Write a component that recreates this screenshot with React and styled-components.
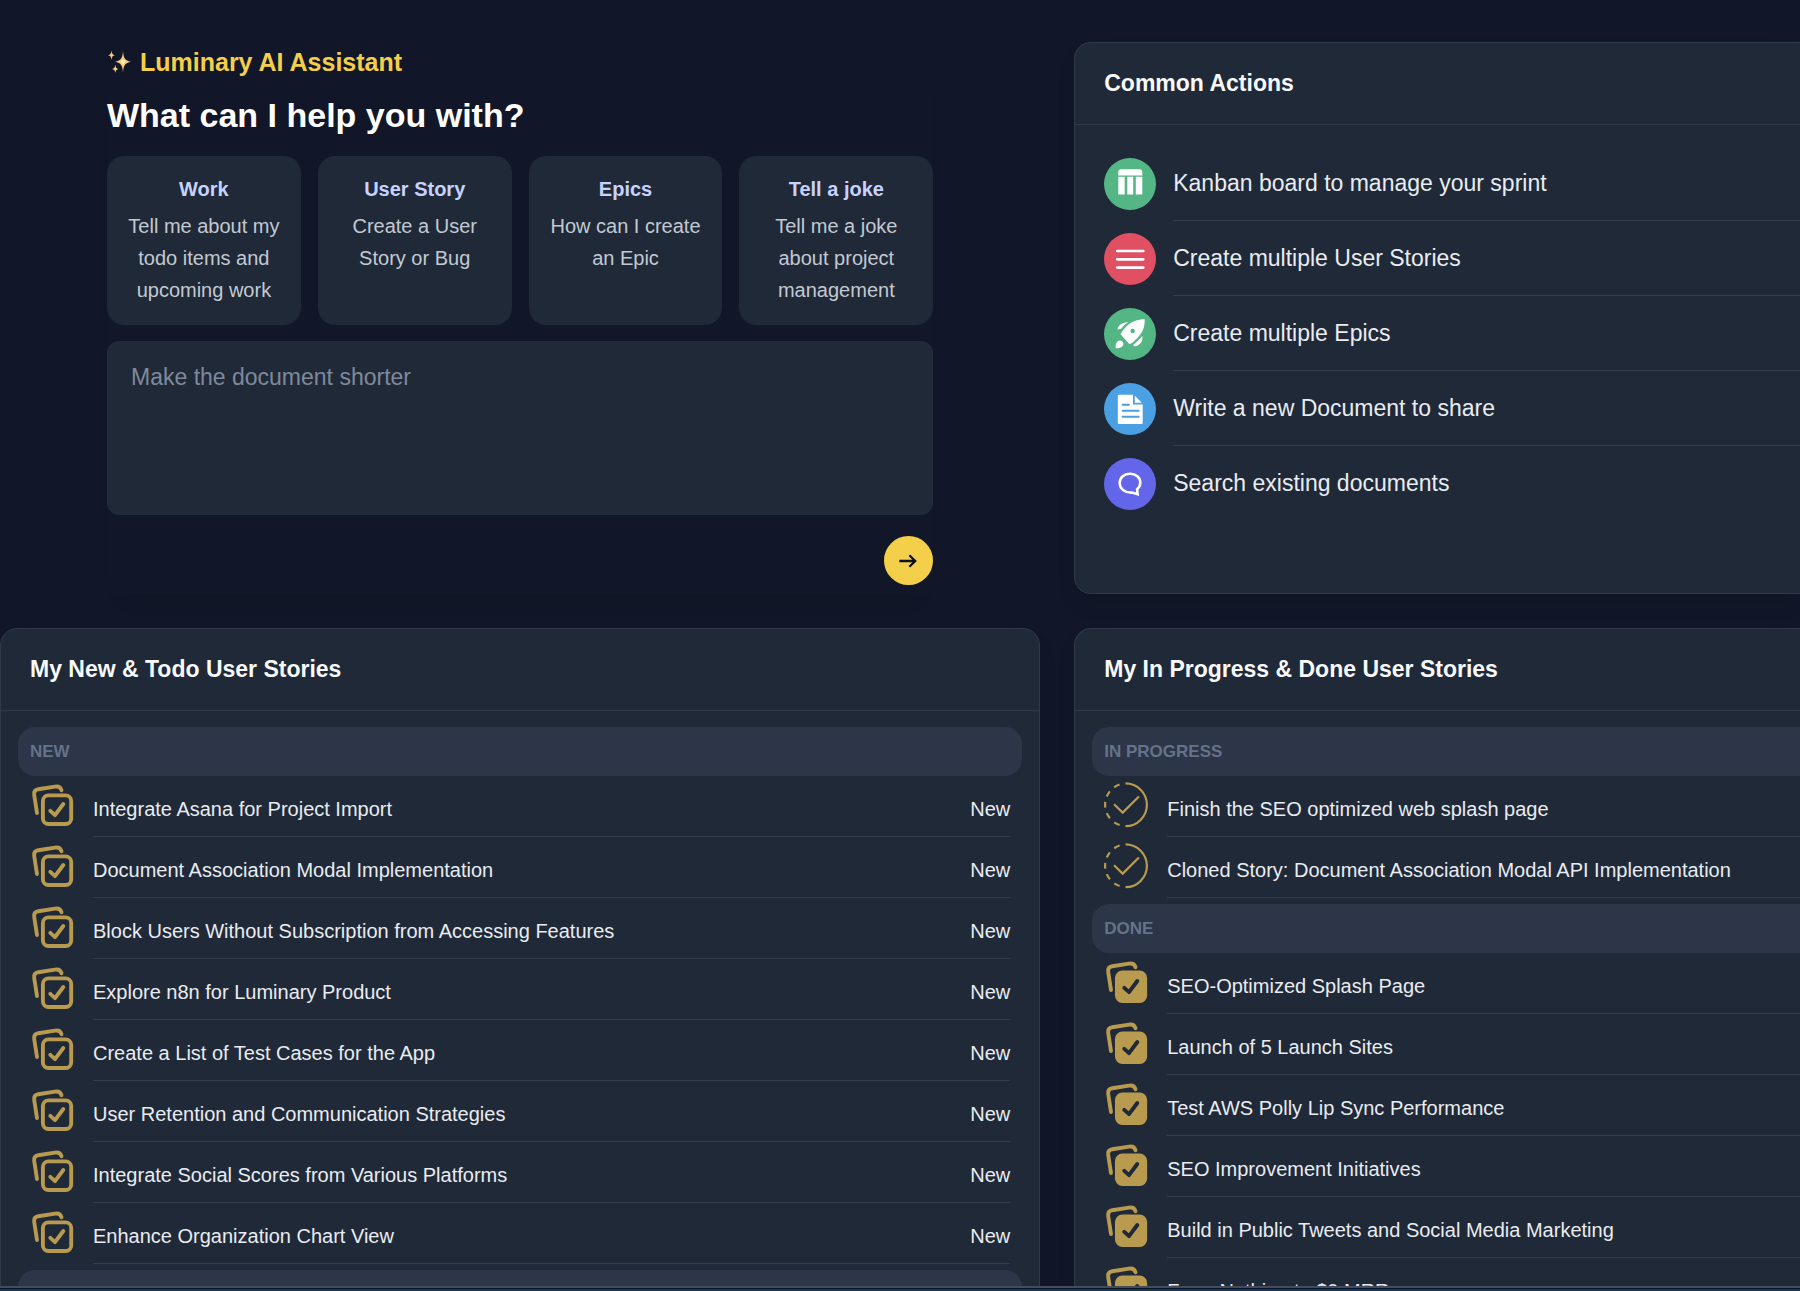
import React from "react";
import styled, { createGlobalStyle } from "styled-components";

const GlobalStyle = createGlobalStyle`
  *, *::before, *::after { box-sizing: border-box; }
  body {
    margin: 0;
    background: #111728;
    color: #e9ecf1;
    font-family: "Liberation Sans", Arial, Helvetica, sans-serif;
    font-size: 20px;
  }
  button, textarea { font: inherit; color: inherit; }
  h1, h2, h3, p, ul { margin: 0; padding: 0; }
`;

const Page = styled.div`
  height: 100vh;
  display: flex;
  flex-direction: column;
`;

const Dashboard = styled.main`
  flex: 1;
  min-height: 0;
  overflow: hidden;
  display: grid;
  grid-template-columns: minmax(0, 43fr) minmax(0, 30fr);
  grid-template-rows: max-content max-content;
  align-content: start;
  gap: 34px;
  padding-top: 42px;
`;

const Dock = styled.footer`
  flex: none;
  height: 5px;
  border-top: 2px solid #444b5b;
  background: linear-gradient(#0c1526 1px, #133557 1px);
`;

const Assistant = styled.section`
  margin: 0 107px;
  min-height: 552px;
  display: flex;
  flex-direction: column;
  box-shadow: 0 20px 20px -18px rgba(0, 0, 0, 0.14);
`;

const Brand = styled.p`
  display: flex;
  align-items: center;
  gap: 7px;
  font-size: 25px;
  font-weight: 700;
  line-height: 40px;
  color: #f4cf49;
`;

const Question = styled.h1`
  margin: 13px 0 20px;
  font-size: 34px;
  line-height: 41px;
  color: #ffffff;
`;

const Prompts = styled.div`
  display: grid;
  grid-template-columns: repeat(4, minmax(0, 1fr));
  gap: 17px;
`;

const PromptCard = styled.button`
  display: flex;
  flex-direction: column;
  align-items: center;
  justify-content: flex-start;
  gap: 5px;
  padding: 17px 17px 19px;
  border: 0;
  border-radius: 17px;
  background: #202938;
  line-height: 32px;
  text-align: center;
  color: #c3c9d2;
  cursor: pointer;
`;

const PromptTitle = styled.strong`
  color: #c7d2fe;
`;

const AskForm = styled.form`
  display: flex;
  flex-direction: column;
  align-items: flex-end;
  margin-top: 16px;
  gap: 21px;
`;

const AskBox = styled.textarea`
  display: block;
  width: 100%;
  height: 174px;
  padding: 21px 23px;
  border: 1px solid #232c3b;
  border-radius: 12px;
  background: #202938;
  font-size: 23px;
  line-height: 28px;
  resize: none;
  outline: none;
  &::placeholder { color: #7f899b; opacity: 1; }
`;

const SendButton = styled.button`
  display: grid;
  place-items: center;
  width: 49px;
  height: 49px;
  padding: 0;
  border: 0;
  border-radius: 50%;
  background: #f4cf49;
  color: #0b0f19;
  cursor: pointer;
`;

const Panel = styled.section`
  min-height: 552px;
  border: 1px solid #303949;
  border-right-width: ${(p) => (p.$bleed ? "0" : "1px")};
  border-radius: ${(p) => (p.$bleed ? "17px 0 0 17px" : "17px")};
  background: #202938;
  box-shadow: 0 12px 24px -6px rgba(0, 0, 0, 0.12);
`;

const PanelTitle = styled.h2`
  padding: 0 29px;
  border-bottom: 1px solid #303949;
  font-size: 23px;
  line-height: 81px;
  color: #f8fafc;
`;

const ActionList = styled.ul`
  list-style: none;
  padding: 21px 0 0 29px;
`;

const ActionLink = styled.a`
  display: flex;
  align-items: center;
  gap: 17px;
  color: inherit;
  text-decoration: none;
`;

const Badge = styled.span`
  flex: none;
  display: grid;
  place-items: center;
  width: 52px;
  height: 52px;
  border-radius: 50%;
  background: ${(p) => p.$color};
  color: #ffffff;
`;

const ActionText = styled.span`
  flex: 1;
  border-bottom: 1px solid ${(p) => (p.$last ? "transparent" : "#333c4c")};
  font-size: 23px;
  line-height: 74px;
`;

const PanelBody = styled.div`
  display: flex;
  flex-direction: column;
  gap: 6px;
  padding: 16px ${(p) => (p.$bleed ? "0" : "17px")} 17px 17px;
`;

const GroupTitle = styled.h3`
  padding: 0 12px;
  border-radius: ${(p) => (p.$bleed ? "17px 0 0 17px" : "17px")};
  background: #2d3548;
  font-size: 17px;
  line-height: 49px;
  text-transform: uppercase;
  color: #64728a;
`;

const StoryList = styled.ul`
  list-style: none;
`;

const Story = styled.li`
  display: flex;
  align-items: flex-start;
  gap: 17px;
  padding: 6px ${(p) => (p.$bleed ? "0" : "12px")} 0 12px;
`;

const StoryLine = styled.div`
  flex: 1;
  display: flex;
  justify-content: space-between;
  border-bottom: 1px solid #333c4c;
  line-height: 54px;
  white-space: nowrap;
`;

const Icon = styled.svg`
  flex: none;
  display: block;
`;

function Sparkles() {
  return (
    <Icon width="26" height="24" viewBox="0 0 26 24" aria-hidden="true">
      <g fill="#f6cd78">
        <path d="M16 1C16.6 8 17.8 10.600 24 11.700C17.800 12.800 16.600 15.500 16 22.500C15.400 15.500 14.200 12.800 8 11.700C14.200 10.600 15.400 8 16 1Z" />
        <path d="M4.500 0.500C4.900 3.700 5.500 4.700 8 5.200C5.500 5.700 4.900 6.700 4.500 10C4.100 6.700 3.500 5.700 1 5.200C3.500 4.700 4.100 3.700 4.500 0.500Z" />
        <path d="M8.300 14.500C8.700 17.500 9.300 18.500 11.500 19C9.300 19.500 8.700 20.400 8.300 23C7.900 20.400 7.300 19.500 5 19C7.300 18.500 7.900 17.500 8.300 14.500Z" />
      </g>
      <circle cx="16" cy="11.700" r="2.200" fill="#fdeeb0" />
    </Icon>
  );
}

function ArrowRight() {
  return (
    <Icon width="21" height="20" viewBox="0 0 21 20" fill="none" stroke="currentColor" strokeWidth="2.300" aria-hidden="true">
      <path d="M1.300 10H17.400M11.400 4.200L17.200 10L11.400 15.800" />
    </Icon>
  );
}

function KanbanIcon() {
  return (
    <Icon width="52" height="52" viewBox="0 0 52 52" fill="currentColor" aria-hidden="true">
      <path d="M14.300 17.500V14a2.700 2.700 0 0 1 2.700-2.700H35.600a2.700 2.700 0 0 1 2.700 2.700V17.500Z" />
      <path d="M14.300 18.700H20.700V36.400H14.300ZM23.300 18.700H29.200V36.400H23.300ZM31.800 18.700H38.300V36.400H31.800Z" />
    </Icon>
  );
}

function LinesIcon() {
  return (
    <Icon width="52" height="52" viewBox="0 0 52 52" stroke="currentColor" strokeWidth="2.700" strokeLinecap="round" aria-hidden="true">
      <path d="M13.200 18H39.300M13.200 26.300H39.300M13.200 34.600H39.300" />
    </Icon>
  );
}

function RocketIcon() {
  return (
    <Icon width="52" height="52" viewBox="0 0 52 52" fill="currentColor" aria-hidden="true">
      <path fillRule="evenodd" d="M40.700 11.300C35.500 11.300 29 12.700 24.500 16.600C21.200 19.400 18.500 22.800 16.500 26.200L25 35.800C26.800 36 28 35 29.300 34C32.500 31.200 35.500 28 37.700 24.500C40 20.700 40.900 16 40.700 11.300ZM28.700 20.800a2.200 2.200 0 1 1 0 4.400a2.200 2.200 0 0 1 0-4.400Z" />
      <path d="M24.400 14C20.500 14.600 17.400 15.200 15.600 17.200C14.200 18.700 13.500 20.300 13.600 21.500L17.200 20.800C19.200 18 21.500 15.800 24.400 14Z" />
      <path d="M38.300 27.800C38.700 31.200 38.200 33.700 36.300 35.600C34.700 37.200 32.800 38.300 31.200 38.300C30 38.300 29.300 37.700 29.300 36.700C32.800 34.200 35.700 31.200 38.300 27.800Z" />
      <path d="M11.600 40.300C11.400 37.200 12 34.800 13.500 33.400C15 32 17.300 32.200 18.500 33.500C19.700 34.800 19.700 36.900 18.400 38.300C16.900 39.800 14.500 40.400 11.600 40.300Z" />
    </Icon>
  );
}

function DocumentIcon() {
  return (
    <Icon width="52" height="52" viewBox="0 0 52 52" aria-hidden="true">
      <path fill="currentColor" d="M15 11.800H29V21.600H38.700V39.800a1.200 1.200 0 0 1-1.200 1.200H15a1.200 1.200 0 0 1-1.200-1.200V13a1.200 1.200 0 0 1 1.200-1.200ZM30.800 12.700L37.800 19.700H30.800Z" />
      <path stroke="#4aa0e2" strokeWidth="1.900" strokeLinecap="round" d="M18.600 21.700H25M18.600 27.800H34.700M18.600 33.800H34.700" />
    </Icon>
  );
}

function ChatIcon() {
  return (
    <Icon width="52" height="52" viewBox="0 0 52 52" fill="none" stroke="currentColor" strokeWidth="2.600" aria-hidden="true">
      <path d="M26 15.700C31.800 15.700 36.300 19.400 36.300 24.600C36.300 27.400 35.200 29.600 33.100 31.200L33.600 36.200L28.200 34.600C21.500 35 15.700 31 15.700 25C15.700 19.400 20.200 15.700 26 15.700Z" />
    </Icon>
  );
}

function StackCheckIcon({ filled }) {
  return (
    <Icon width="46" height="46" viewBox="0 0 46 46" fill="none" stroke="#b89b4f" strokeWidth="3.900" strokeLinecap="round" strokeLinejoin="round" aria-hidden="true">
      <path d="M7 31L4.200 13C3.700 9.500 5 7.800 8.300 7.200L25 4.600C28.700 4 30.600 5.100 31.500 8.300" />
      <rect x="12.900" y="13.400" width="28.300" height="28.600" rx="5.500" fill={filled ? "#b89b4f" : "none"} />
      <path d="M20.300 28.900L25 33.100L33.300 22" stroke={filled ? "#202938" : "#b89b4f"} />
    </Icon>
  );
}

function ProgressIcon() {
  return (
    <Icon width="46" height="46" viewBox="0 0 46 46" fill="none" stroke="#b89b4f" strokeWidth="2.200" aria-hidden="true">
      <path d="M21.500 1.400A21.400 21.400 0 0 1 21.500 44.200" />
      <path pathLength="180" strokeDasharray="0 19 16 16 16 15 16 15 16 16 16 30" d="M22.500 44.200A21.400 21.400 0 0 1 22.500 1.400" />
      <path d="M10 22.300L18.700 30.600L34.900 14.500" />
    </Icon>
  );
}

const prompts = [
  { title: "Work", text: "Tell me about my todo items and upcoming work" },
  { title: "User Story", text: "Create a User Story or Bug" },
  { title: "Epics", text: "How can I create an Epic" },
  { title: "Tell a joke", text: "Tell me a joke about project management" },
];

const actions = [
  { text: "Kanban board to manage your sprint", color: "#55b685", icon: <KanbanIcon /> },
  { text: "Create multiple User Stories", color: "#e04f62", icon: <LinesIcon /> },
  { text: "Create multiple Epics", color: "#55b685", icon: <RocketIcon /> },
  { text: "Write a new Document to share", color: "#4aa0e2", icon: <DocumentIcon /> },
  { text: "Search existing documents", color: "#6366e8", icon: <ChatIcon /> },
];

const newStories = [
  "Integrate Asana for Project Import",
  "Document Association Modal Implementation",
  "Block Users Without Subscription from Accessing Features",
  "Explore n8n for Luminary Product",
  "Create a List of Test Cases for the App",
  "User Retention and Communication Strategies",
  "Integrate Social Scores from Various Platforms",
  "Enhance Organization Chart View",
];

const inProgressStories = [
  "Finish the SEO optimized web splash page",
  "Cloned Story: Document Association Modal API Implementation",
];

const doneStories = [
  "SEO-Optimized Splash Page",
  "Launch of 5 Launch Sites",
  "Test AWS Polly Lip Sync Performance",
  "SEO Improvement Initiatives",
  "Build in Public Tweets and Social Media Marketing",
  "From Nothing to $0 MRR",
];

function Stories({ items, icon, status, bleed }) {
  return (
    <StoryList>
      {items.map((title) => (
        <Story key={title} $bleed={bleed}>
          {icon}
          <StoryLine>
            <span>{title}</span>
            {status && <span>{status}</span>}
          </StoryLine>
        </Story>
      ))}
    </StoryList>
  );
}

export default function App() {
  return (
    <Page>
      <GlobalStyle />
      <Dashboard>
        <Assistant>
          <Brand>
            <Sparkles />
            Luminary AI Assistant
          </Brand>
          <Question>What can I help you with?</Question>
          <Prompts>
            {prompts.map((p) => (
              <PromptCard key={p.title} type="button">
                <PromptTitle>{p.title}</PromptTitle>
                <span>{p.text}</span>
              </PromptCard>
            ))}
          </Prompts>
          <AskForm onSubmit={(e) => e.preventDefault()}>
            <AskBox aria-label="Message" placeholder="Make the document shorter" />
            <SendButton type="submit" aria-label="Send">
              <ArrowRight />
            </SendButton>
          </AskForm>
        </Assistant>

        <Panel $bleed>
          <PanelTitle>Common Actions</PanelTitle>
          <ActionList>
            {actions.map((a, i) => (
              <li key={a.text}>
                <ActionLink href="#">
                  <Badge $color={a.color}>{a.icon}</Badge>
                  <ActionText $last={i === actions.length - 1}>{a.text}</ActionText>
                </ActionLink>
              </li>
            ))}
          </ActionList>
        </Panel>

        <Panel>
          <PanelTitle>My New &amp; Todo User Stories</PanelTitle>
          <PanelBody>
            <div>
              <GroupTitle>New</GroupTitle>
              <Stories items={newStories} icon={<StackCheckIcon />} status="New" />
            </div>
            <GroupTitle>Todo</GroupTitle>
          </PanelBody>
        </Panel>

        <Panel $bleed>
          <PanelTitle>My In Progress &amp; Done User Stories</PanelTitle>
          <PanelBody $bleed>
            <div>
              <GroupTitle $bleed>In Progress</GroupTitle>
              <Stories items={inProgressStories} icon={<ProgressIcon />} bleed />
            </div>
            <div>
              <GroupTitle $bleed>Done</GroupTitle>
              <Stories items={doneStories} icon={<StackCheckIcon filled />} bleed />
            </div>
          </PanelBody>
        </Panel>
      </Dashboard>
      <Dock />
    </Page>
  );
}
